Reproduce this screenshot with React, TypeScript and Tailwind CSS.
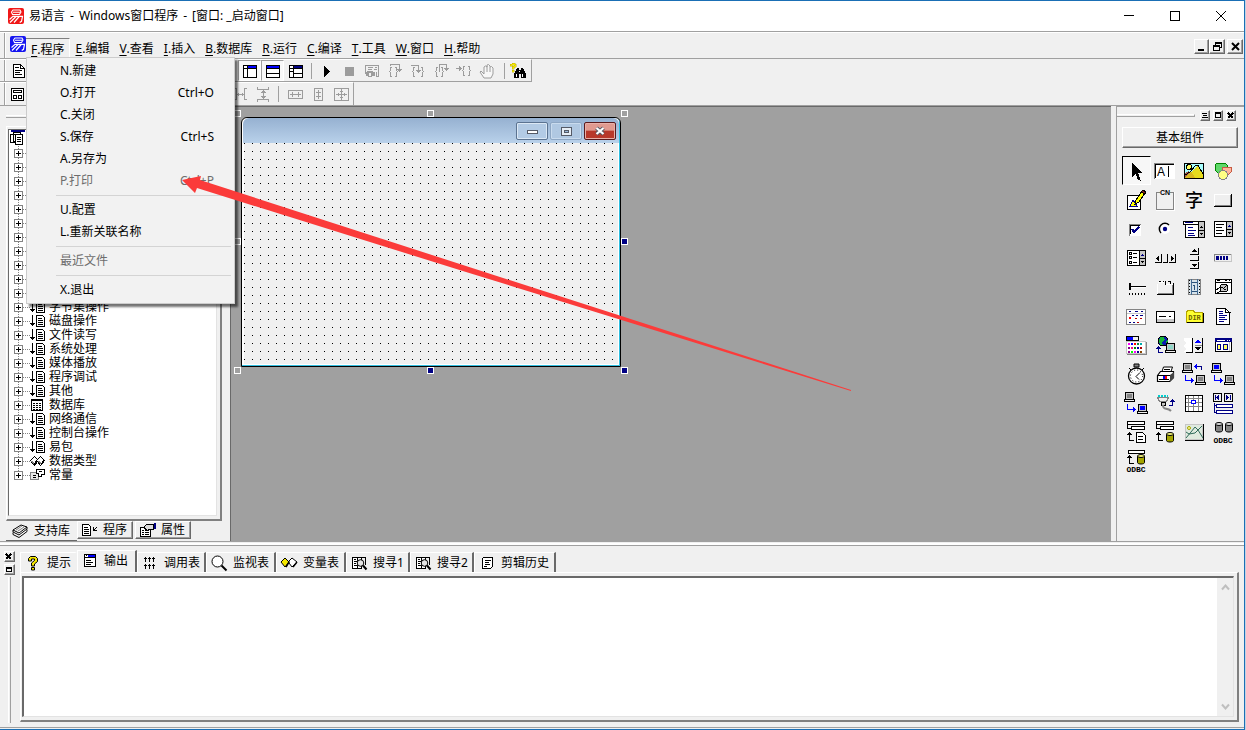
import type { ReactNode } from "react";

const K = "#000";
const NAVY = "#000084";
const BLUE = "#0000ff";
const GRAY = "#848484";
const SILVER = "#c6c6c6";

const raised =
  "border border-t-white border-l-white border-r-[#696969] border-b-[#696969] shadow-[inset_-1px_-1px_0_#a0a0a0]";

type ArtProps = { size?: number; w?: number; h?: number; children: ReactNode; smooth?: boolean };

function Art({ size = 26, w, h, children, smooth }: ArtProps) {
  const width = w ?? size;
  const height = h ?? size;
  return (
    <svg
      width={width}
      height={height}
      viewBox={`0 0 ${width} ${height}`}
      fill="none"
      stroke="none"
      shapeRendering={smooth ? "auto" : "crispEdges"}
      className="block shrink-0 overflow-visible"
      aria-hidden="true"
    >
      {children}
    </svg>
  );
}

type BoxProps = { x: number; y: number; w: number; h: number; f?: string; s?: string };

function Box({ x, y, w, h, f = "none", s }: BoxProps) {
  return s ? (
    <rect x={x + 0.5} y={y + 0.5} width={w - 1} height={h - 1} fill={f} stroke={s} />
  ) : (
    <rect x={x} y={y} width={w} height={h} fill={f} />
  );
}

function Line({ d, c = K, w = 1 }: { d: string; c?: string; w?: number }) {
  return <path d={d} stroke={c} strokeWidth={w} />;
}

/* ---------- small shared glyphs ---------- */

function Logo({ color }: { color: string }) {
  return (
    <Art size={16} smooth>
      <rect x="0" y="0" width="16" height="16" rx="2" fill={color} />
      <path d="M4.500 6.500L3.500 4l1.500-2h7l1 2-1.500 2.500zM5 4.300h7" stroke="#fff" strokeWidth="1.100" />
      <path d="M1.500 11.500L5 8.300h9.500l-1 5-1.800 1.200M8 8.500L2 14.500M11.200 8.500L6 14.500" stroke="#fff" strokeWidth="1.200" />
    </Art>
  );
}

function Monitor({ x, y, screen }: { x: number; y: number; screen: string }) {
  return (
    <g transform={`translate(${x} ${y})`}>
      <Box x={1} y={0} w={9} h={8} f={SILVER} s={K} />
      <Box x={3} y={2} w={5} h={4} f={screen} />
      <Box x={0} y={7} w={11} h={3} f="#efefef" s={K} />
    </g>
  );
}

function Disk({ x, y, f }: { x: number; y: number; f: string }) {
  return (
    <g transform={`translate(${x} ${y})`} shapeRendering="auto">
      <path d="M.5 2v6.500c0 2 7 2 7 0V2" fill={f} stroke={K} />
      <ellipse cx="4" cy="2" rx="3.500" ry="1.500" fill={f === GRAY ? "#dedede" : "#f4f47a"} stroke={K} />
    </g>
  );
}

function Rows({ y, w = 18 }: { y: number; w?: number }) {
  return (
    <g>
      <Box x={4} y={y} w={w} h={4} f="#fff" s={K} />
      <Box x={8} y={y + 5} w={w - 4} h={4} f="#fff" s={K} />
      <Line d={`M4.500 ${y + 2}v5.500h4`} />
    </g>
  );
}

const UpTurn = ({ x, y }: { x: number; y: number }) => (
  <g transform={`translate(${x} ${y})`}>
    <Line d="M2.500 1v7.500h4" />
    <path d="M0 3L2.500 0 5 3z" fill={K} />
  </g>
);

const Odbc = () => (
  <text x="13" y="24" fontSize="8" fontWeight="bold" textAnchor="middle" fill={K} className="font-['Liberation_Mono',monospace]">
    ODBC
  </text>
);

/* ---------- component palette ---------- */

const palette: { name: string; art: ReactNode }[] = [
  { name: "pointer", art: <path d="M9 4v15l3.500-3.500L15 22l3 1-1-3-2-5h4.500z" fill={K} /> },
  {
    name: "edit",
    art: (
      <>
        <Box x={2} y={5} w={21} h={16} f="#fff" />
        <Line d="M2.500 21V5.500H22" c={GRAY} />
        <Line d="M3.500 20V6.500H22" />
        <text x="5" y="18" fontSize="12" fill={K} className="font-['Liberation_Sans',sans-serif]">A</text>
        <Line d="M16.500 8v11" />
      </>
    ),
  },
  {
    name: "picture",
    art: (
      <>
        <Box x={3} y={5} w={20} h={16} f="#a8ffff" s={K} />
        <path d="M7 20l4-6 5-6 3 2 3 7v3z" fill="#e6dc1e" />
        <path d="M4 20v-5l4-2 4 7z" fill="#a05a4a" />
        <path d="M4 20l6-7 4 7z" fill="#d8b820" />
        <circle cx="8" cy="9" r="2.500" fill="#ffff63" stroke={K} />
        <path d="M4 17l5-3 6-7h2l5 9" stroke={K} />
      </>
    ),
  },
  {
    name: "shape",
    art: (
      <>
        <path d="M5 7l2-2h8l2 2v5l-2 3H8l-3-3z" fill="#5fd86a" stroke="#008400" />
        <path d="M13 9h8v5l-3 3h-4l-2-3z" fill="#ffb59c" stroke="#c65a42" />
        <circle cx="13" cy="17" r="4.500" fill="#ffff84" stroke={GRAY} />
      </>
    ),
  },
  {
    name: "canvas",
    art: (
      <>
        <path d="M4.500 8.500h10l3 3v11h-13z" fill="#fff" stroke={K} />
        <path d="M7 19l3-6 4 6z" fill="#ffff00" stroke={NAVY} />
        <path d="M12 17l1-4 6-9 3 2-6 9z" fill="#ffff00" stroke={K} />
        <path d="M18 5l2-2 3 2-1 2z" fill="#842020" stroke={K} />
      </>
    ),
  },
  {
    name: "group",
    art: (
      <>
        <path d="M8 5.500H4.500v17h17v-17H18" stroke={GRAY} />
        <path d="M22.500 5v18.500H4" stroke="#fff" />
        <text x="13" y="8" fontSize="7" fontWeight="bold" textAnchor="middle" fill={K} className="font-['Liberation_Sans',sans-serif]">CN</text>
      </>
    ),
  },
  {
    name: "label",
    art: (
      <text x="13" y="20" fontSize="18" fontWeight="500" textAnchor="middle" fill={K} className="font-['Noto_Sans_CJK_SC',sans-serif]">字</text>
    ),
  },
  {
    name: "button",
    art: (
      <>
        <Box x={4} y={7} w={18} h={13} f="#efefef" />
        <Line d="M4.500 19V7.500H21" c="#fff" />
        <Line d="M5 18.500h15.500V8" c={GRAY} />
        <Line d="M4 19.500h17.500V7" />
      </>
    ),
  },
  {
    name: "check",
    art: (
      <>
        <Box x={6} y={8} w={12} h={12} f="#fff" />
        <Line d="M6.500 20V8.500H18" c={GRAY} />
        <Line d="M7.500 18V9.500H17" />
        <Line d="M9 13l2 3 5-5" c={NAVY} w={2} />
      </>
    ),
  },
  {
    name: "radio",
    art: (
      <g shapeRendering="auto">
        <circle cx="13" cy="13" r="5" fill="#fff" />
        <path d="M9 17a5.500 5.500 0 0 1 8-8" stroke={K} strokeWidth="1.500" />
        <circle cx="13" cy="13" r="2.200" fill={NAVY} />
      </g>
    ),
  },
  {
    name: "combo",
    art: (
      <>
        <Box x={2} y={5} w={22} h={4} f="#fff" s={K} />
        <Box x={4} y={8} w={20} h={14} f="#fff" s={K} />
        <Line d="M4 6.500h8" c={NAVY} />
        <Line d="M7 11.500h5M7 14.500h8M7 17.500h6M7 19.500h7" c={NAVY} />
        <Box x={17} y={5} w={7} h={17} f={SILVER} s={K} />
        <path d="M19 11h3v1h-3zM20 10h1v1h-1zM19 17h3v1h-3zM20 18h1v1h-1z" fill={K} />
        <Line d="M17 14.500h7" />
      </>
    ),
  },
  {
    name: "list",
    art: (
      <>
        <Box x={4} y={5} w={19} h={16} f="#fff" s={K} />
        <Line d="M6 8.500h8M6 11.500h6M6 14.500h8M6 17.500h6" />
        <Box x={16} y={5} w={7} h={16} f={SILVER} s={K} />
        <path d="M18 10h3v1h-3zM19 9h1v1h-1z" fill={NAVY} />
        <path d="M18 16h3v1h-3zM19 17h1v1h-1z" fill={K} />
        <Line d="M16 13.500h7" />
      </>
    ),
  },
  {
    name: "checklist",
    art: (
      <>
        <Box x={4} y={5} w={19} h={16} f="#fff" s={K} />
        <Box x={6} y={7} w={3} h={3} s={K} />
        <Box x={6} y={11} w={3} h={3} s={K} />
        <Box x={6} y={16} w={3} h={3} s={K} />
        <Line d="M10 8.500h4M10 12.500h4M10 17.500h4" />
        <Box x={16} y={5} w={7} h={16} f={SILVER} s={K} />
        <path d="M18 10h3v1h-3zM19 9h1v1h-1z" fill={NAVY} />
        <path d="M18 16h3v1h-3zM19 17h1v1h-1z" fill={K} />
        <Line d="M16 13.500h7" />
      </>
    ),
  },
  {
    name: "hscroll",
    art: (
      <>
        <Box x={3} y={9} w={21} h={9} f="#efefef" />
        <path d="M4 13.500l3-3v6zM22 13.500l-3-3v6z" fill={K} />
        <Line d="M3 17.500h6.500V9M11 17.500h4.500V9M17 17.500h6.500V9" />
      </>
    ),
  },
  {
    name: "vscroll",
    art: (
      <>
        <Box x={9} y={3} w={9} h={21} f="#efefef" />
        <path d="M13.500 4l3 3h-6zM13.500 22l3-3h-6z" fill={K} />
        <Line d="M9 9.500h8.500V3M9 15.500h8.500V11M9 23.500h8.500V17" />
      </>
    ),
  },
  {
    name: "progress",
    art: (
      <>
        <Box x={4} y={9} w={18} h={8} f="#efefef" s={SILVER} />
        <Line d="M4 9.500h17M4.500 9v7" c={GRAY} />
        <path d="M6 11h3v4H6zM10 11h2v4h-2zM13 11h2v4h-2zM16 11h2v4h-2z" fill={NAVY} />
      </>
    ),
  },
  {
    name: "slider",
    art: (
      <>
        <Line d="M6 12.500h17" />
        <Line d="M6 13.500h17" c="#fff" />
        <path d="M6 9h2v6l-1 2-1-2z" fill={K} />
        <Line d="M6.500 19v2M9.500 19v2M12.500 19v2M15.500 19v2M18.500 19v2M21.500 19v2" />
      </>
    ),
  },
  {
    name: "tabs",
    art: (
      <>
        <Line d="M5.500 20V10M6 8.500h6M13 10.500h8" c="#fff" />
        <Line d="M7 7.500h2M11 7.500h1M16 7.500h2" />
        <Line d="M13.500 7v4M5 20.500h16.500V9M18.500 7v3" />
        <Line d="M6 19.500h14.500V11" c={GRAY} />
      </>
    ),
  },
  {
    name: "movie",
    art: (
      <>
        <Box x={7} y={5} w={13} h={16} f="#d6e3ec" s={GRAY} />
        <path d="M8.500 6v14M18.500 6v14" stroke={K} strokeDasharray="1 2" />
        <Line d="M10.500 5v16M16.500 5v16" c="#426b94" />
        <Line d="M11 8.500h5M13.500 11v5M12 11.500h2M11 17.500h5" c="#29527b" />
      </>
    ),
  },
  {
    name: "video",
    art: (
      <>
        <Box x={5} y={5} w={17} h={15} f="#fff" s={K} />
        <Line d="M5 8.500h17M7 6.500h3M15 6.500h2M19 6.500h1" />
        <circle cx="14" cy="14" r="4" fill={SILVER} stroke={K} />
        <Line d="M6 16l5-3 5 3M7 19l4-2M14 14l3-3" />
      </>
    ),
  },
  {
    name: "date",
    art: (
      <>
        <Box x={3} y={6} w={20} h={16} f="#fff" s={GRAY} />
        <Line d="M4 10.500h18" c={SILVER} />
        <Line d="M6 8.500h2M12 8.500h3M18 8.500h2" c={NAVY} />
        <Line d="M9 12.500h2M13 12.500h2M17 12.500h3M6 19.500h2M10 19.500h2" c={NAVY} />
        <path d="M6 14h2v2H6z" fill="#ff0000" />
        <Line d="M12 15.500h2M17 15.500h2M14 19.500h2" c="#b50000" />
      </>
    ),
  },
  {
    name: "combo-edit",
    art: (
      <>
        <rect x="4.500" y="8.500" width="18" height="11" rx="1" fill="#fff" stroke={K} />
        <Box x={5} y={16} w={17} h={3} f={SILVER} />
        <Line d="M7 13.500h7M17 13.500h2" />
      </>
    ),
  },
  {
    name: "directory",
    art: (
      <>
        <path d="M5.500 19V9l2-2h4l2 2h8v10z" fill="#ffff31" stroke="#b5a500" />
        <Line d="M6 19.500h16.500V10" />
        <text x="13.500" y="17" fontSize="7" fontWeight="bold" textAnchor="middle" fill="#6b6300" className="font-['Liberation_Mono',monospace]">DIR</text>
      </>
    ),
  },
  {
    name: "document",
    art: (
      <>
        <path d="M6.500 5.500h9l4 4v12h-13z" fill="#fff" stroke={K} />
        <Line d="M15.500 5v4.500h5" />
        <Line d="M9 8.500h4M9 10.500h4M9 12.500h8M9 14.500h6M9 16.500h8M9 18.500h5" c={NAVY} />
      </>
    ),
  },
  {
    name: "colors",
    art: (
      <>
        <Box x={3} y={4} w={13} h={5} f={BLUE} s={K} />
        <Box x={10} y={5} w={5} h={3} f="#efefef" />
        <Box x={3} y={9} w={20} h={13} f="#fff" s={SILVER} />
        {["#f0f", "#00f", "#f00", "#084", "#0aa", "#808", "#f08", "#080", "#00a", "#a00", "#808", "#0f0", "#f0f", "#008", "#840"].map((c, i) => (
          <Box key={i} x={5 + (i % 5) * 3} y={11 + Math.floor(i / 5) * 4} w={2} h={2} f={c} />
        ))}
        <Line d="M4 22.500h19.500V10" c={GRAY} />
      </>
    ),
  },
  {
    name: "internet",
    art: (
      <>
        <circle cx="11" cy="9" r="5" fill="#0a1fb0" stroke={K} />
        <path d="M8 5h4l1 3-3 2 1 3H8l-1-4zM14 9l2-1-1 4z" fill="#17b53a" />
        <Monitor x={13} y={11} screen="#8fd8c8" />
        <Line d="M6.500 15v5.500h4" c={NAVY} />
        <path d="M4 17l2.500-3L9 17z" fill={NAVY} />
      </>
    ),
  },
  {
    name: "spin",
    art: (
      <>
        <path d="M3 6h9v14H3l2-3-2-3 2-3-2-2z" fill="#fff" />
        <Line d="M5 20.500h6M14 20.500h8" />
        <Line d="M11.500 6v15M21.500 6v15" />
        <Line d="M14 13.500h7" c={GRAY} />
        <path d="M14 11h6l-3-4z" fill={BLUE} />
        <path d="M14 15h6l-3 4z" fill={K} />
      </>
    ),
  },
  {
    name: "dialog",
    art: (
      <>
        <Box x={5} y={6} w={17} h={14} f="#fff" s={K} />
        <Box x={5} y={6} w={17} h={4} f={NAVY} />
        <Line d="M7 8.500h8M17 8.500h1M19 8.500h1" c="#fff" />
        <Box x={7} y={12} w={4} h={6} f="#ffff63" s={NAVY} />
        <Box x={13} y={12} w={5} h={6} f="#ffff63" s={NAVY} />
        <Line d="M19.500 10v9" c={SILVER} />
      </>
    ),
  },
  {
    name: "clock",
    art: (
      <g shapeRendering="auto">
        <path d="M11 3h5v3h-5z" fill={GRAY} stroke={K} />
        <circle cx="13.500" cy="15" r="8" fill="#fff" stroke={K} strokeWidth="1.300" />
        <circle cx="13.500" cy="15" r="6" stroke={K} strokeDasharray="1 2.140" />
        <Line d="M13 15.500l4-4M13 15.500l3 3M6 7l2 2M21 7l-2 2" />
      </g>
    ),
  },
  {
    name: "printer",
    art: (
      <g shapeRendering="auto">
        <path d="M9.500 12l2-6h9l-2 6z" fill="#fff" stroke={K} />
        <path d="M5.500 14.500l3-4h13v6l-4 4h-12z" fill="#fff" stroke={K} strokeWidth="1.200" />
        <path d="M18 14l4-3v6l-4 4z" fill="#444" />
        <Line d="M12 8.500h6M11 10.500h6M6 14.500h12M7 18.500h10" />
        <path d="M11 15h2v3h-2z" fill={BLUE} />
        <path d="M13 15h2v3h-2z" fill="#f00" />
      </g>
    ),
  },
  {
    name: "datagram",
    art: (
      <>
        <Monitor x={1} y={2} screen={GRAY} />
        <Monitor x={14} y={14} screen={GRAY} />
        <Line d="M20.500 9V5.500H14" c={NAVY} />
        <path d="M13 5.500l3-3v6z" fill={BLUE} />
        <Line d="M4.500 14v5.500h6" c={BLUE} />
        <path d="M13 19.500l-3-3v6z" fill={BLUE} />
      </>
    ),
  },
  {
    name: "client",
    art: (
      <>
        <Monitor x={1} y={2} screen={BLUE} />
        <Monitor x={14} y={14} screen={GRAY} />
        <Line d="M4.500 14v5.500h6" c={BLUE} />
        <path d="M13 19.500l-3-3v6z" fill={BLUE} />
      </>
    ),
  },
  {
    name: "server",
    art: (
      <>
        <Monitor x={1} y={2} screen={GRAY} />
        <Monitor x={14} y={14} screen={BLUE} />
        <Line d="M4.500 14v5.500h6" c={BLUE} />
        <path d="M13 19.500l-3-3v6z" fill={BLUE} />
      </>
    ),
  },
  {
    name: "port",
    art: (
      <>
        <path d="M6 5.500h10" stroke="#00cfcf" strokeWidth="2" strokeDasharray="2 1" />
        <path d="M5.500 7.500h11l-2 4h-7z" fill="#efefef" stroke={GRAY} />
        <path d="M9 12h4v3H9z" fill={SILVER} stroke={K} />
        <g shapeRendering="auto">
          <path d="M11 15c0 6 4 2 8 6" stroke={GRAY} strokeWidth="2" />
        </g>
        <Line d="M17 15.500h3.500V11" c={NAVY} />
        <path d="M18 12l2.500-3 2.500 3z" fill={NAVY} />
      </>
    ),
  },
  {
    name: "table",
    art: (
      <>
        <Box x={4} y={5} w={18} h={17} f="#fff" s={K} />
        <Line d="M4 8.500h18M4 12.500h18M4 16.500h18M7.500 5v17M12.500 5v17M17.500 5v17" c={GRAY} />
        <Box x={10} y={10} w={5} h={4} f="#fff" s={BLUE} />
        <Box x={4} y={5} w={18} h={17} s={K} />
      </>
    ),
  },
  {
    name: "datasource",
    art: (
      <>
        <Box x={3} y={3} w={9} h={9} f="#efefef" s={K} />
        <Box x={14} y={3} w={9} h={9} f="#efefef" s={K} />
        <path d="M5 5h1v5H5zM9 5v5L6 7.500zM20 5h1v5h-1zM16 5v5l3-2.500z" fill={NAVY} />
        <Line d="M4.500 13v9.500h2M4 15.500h2" c={NAVY} />
        <Box x={6} y={14} w={17} h={4} f="#fff" s={NAVY} />
        <Box x={6} y={20} w={17} h={4} f="#fff" s={NAVY} />
      </>
    ),
  },
  {
    name: "provider",
    art: (
      <>
        <Rows y={2} />
        <UpTurn x={4} y={13} />
        <path d="M13.500 13.500h6l3 3v7h-9z" fill="#fff" stroke={K} />
        <Line d="M15 17.500h5M15 20.500h5" />
      </>
    ),
  },
  {
    name: "database",
    art: (
      <>
        <Rows y={2} />
        <UpTurn x={4} y={13} />
        <Disk x={14} y={13} f="#a5a500" />
      </>
    ),
  },
  {
    name: "graph",
    art: (
      <g shapeRendering="auto">
        <Box x={4} y={5} w={18} h={16} f="#dfeadf" s={SILVER} />
        <Line d="M5 19l5-6 4-5 3 3 5 8M5 13l3 2 6-1 7-7" c="#2f6b5a" />
        <circle cx="8" cy="9" r="1.500" stroke="#a5a500" fill="#ffffa0" />
        <Line d="M4 21.500h18.500V5" />
      </g>
    ),
  },
  {
    name: "odbc",
    art: (
      <>
        <Disk x={5} y={3} f={GRAY} />
        <Disk x={15} y={3} f={GRAY} />
        <Odbc />
      </>
    ),
  },
  {
    name: "odbc-provider",
    art: (
      <>
        <Box x={5} y={2} w={17} h={4} f="#fff" s={K} />
        <UpTurn x={4} y={7} />
        <Disk x={14} y={6} f="#a5a500" />
        <Odbc />
      </>
    ),
  },
];

/* ---------- toolbar ---------- */

const G = "#9c9c9c";

function WindowArt({ kind, active = true }: { kind: "left" | "bottom" | "both"; active?: boolean }) {
  return (
    <Art size={16}>
      <Box x={1} y={2} w={14} h={13} f="#fff" s={K} />
      <Line d="M1 5.500h14" />
      <Box x={kind === "bottom" ? 2 : 6} y={3} w={kind === "bottom" ? 12 : 8} h={2} f={active ? BLUE : NAVY} />
      {kind !== "bottom" && <Line d="M5.500 2v13" />}
      {kind === "bottom" && <Line d="M2 10.500h12" />}
      {kind === "both" && <Line d="M6 10.500h9M1 8.500h4" />}
    </Art>
  );
}

function Braces({ arc, head, wide }: { arc: string; head: string; wide?: boolean }) {
  return (
    <Art size={16}>
      <Line d="M5 4.500H3.500V8M2 8.500h1M3.500 9v4.500H5" c={G} />
      {wide ? (
        <Line d="M11 4.500h1.500V8M13 8.500h1M12.500 9v4.500H11" c={G} />
      ) : (
        <Line d="M8 4.500h1.500V8M10 8.500h1M9.500 9v4.500H8" c={G} />
      )}
      <Line d={arc} c={G} />
      <path d={head} fill={G} />
    </Art>
  );
}

const mainTools: { name: string; art: ReactNode; pressed?: boolean }[] = [
  { name: "work panel", art: <WindowArt kind="left" />, pressed: true },
  { name: "output panel", art: <WindowArt kind="bottom" />, pressed: true },
  { name: "palette", art: <WindowArt kind="both" active={false} /> },
];

const runTools: { name: string; art: ReactNode }[] = [
  { name: "run", art: <Art size={16}><path d="M6 3v11l6-5.500z" fill={K} /></Art> },
  { name: "stop", art: <Art size={16}><Box x={4} y={4} w={9} h={9} f={G} /></Art> },
  {
    name: "watch",
    art: (
      <Art size={16}>
        <path d="M1.500 9V2.500h13v11h-3" stroke={G} />
        <Line d="M4 4.500h5M11 4.500h2M4 6.500h4M10 6.500h3" c={G} />
        <path d="M1 9h4v4H2zM7 9h4v4H7z" fill={G} />
        <Line d="M5 9.500h2M3 8.500h6M4 13.500h4M12.500 9v4" c={G} />
      </Art>
    ),
  },
  { name: "step over", art: <Braces arc="M3.500 3V1.500h9V6" head="M10 6h5l-2.500 3z" /> },
  { name: "step into", art: <Braces wide arc="M1 2.500h7.500V7" head="M6 7h5l-2.500 3z" /> },
  { name: "step out", art: <Braces arc="M6.500 9V1.500h7V5" head="M11 5h5l-2.500 3z" /> },
  {
    name: "run to cursor",
    art: (
      <Art size={16}>
        <Line d="M9 3.500H7.500V7M6 7.500h1M7.500 8v4.500H9M12 3.500h1.500V7M14 7.500h1M13.500 8v4.500H12M0 5.500h3" c={G} />
        <path d="M3 3v5l3-2.500z" fill={G} />
      </Art>
    ),
  },
  {
    name: "breakpoint",
    art: (
      <Art size={16} smooth>
        <path d="M5 15l-4-6 1-1 3 3V4l1.500-1L8 4V2l1.500-.500L11 3v1l1.500-.500L14 5v6l-2 4z" stroke={G} fill="#f7f7f7" />
        <path d="M8 3v6M11 4v5" stroke={G} />
      </Art>
    ),
  },
];

const layoutTools: { name: string; art: ReactNode }[] = [
  {
    name: "same width",
    art: (
      <Art size={16}>
        <Box x={1} y={4} w={15} h={9} s={G} />
        <Line d="M3 8.500h11M5.500 6v5M11.500 6v5" c={G} />
      </Art>
    ),
  },
  {
    name: "same height",
    art: (
      <Art size={16}>
        <Box x={4} y={2} w={9} h={13} s={G} />
        <Line d="M8.500 4v9M6 6.500h5M6 10.500h5" c={G} />
      </Art>
    ),
  },
  {
    name: "same size",
    art: (
      <Art size={16}>
        <Box x={1} y={2} w={15} h={13} s={G} />
        <Line d="M8.500 3v11M3 8.500h11M7 5.500h3M7 11.500h3M5.500 7v3M11.500 7v3" c={G} />
      </Art>
    ),
  },
];

const Divider = () => <span className="block h-4 w-px bg-[#a0a0a0]" />;
const Grip = () => <span className="ml-1 w-0.5 self-stretch border-r border-l border-r-white border-l-[#a0a0a0]" />;

const DocArt = () => (
  <Art size={16}>
    <path d="M2.500 1.500h7l4 4v9h-11z" fill="#fff" stroke={K} />
    <Line d="M9.500 2v3.500h4M4 4.500h4M4 7.500h7M4 9.500h5M4 11.500h7" />
  </Art>
);

/* ---------- menu ---------- */

const menus = [
  ["F", "程序"], ["E", "编辑"], ["V", "查看"], ["I", "插入"], ["B", "数据库"],
  ["R", "运行"], ["C", "编译"], ["T", "工具"], ["W", "窗口"], ["H", "帮助"],
];

type Entry = { label: string; keys?: string; off?: boolean } | null;

const fileMenu: Entry[] = [
  { label: "N.新建" },
  { label: "O.打开", keys: "Ctrl+O" },
  { label: "C.关闭" },
  { label: "S.保存", keys: "Ctrl+S" },
  { label: "A.另存为" },
  { label: "P.打印", keys: "Ctrl+P", off: true },
  null,
  { label: "U.配置" },
  { label: "L.重新关联名称" },
  null,
  { label: "最近文件", off: true },
  null,
  { label: "X.退出" },
];

function FileMenu() {
  return (
    <div
      role="menu"
      className="absolute top-[19px] left-0 z-20 w-[209px] border border-[#ccc] bg-[#f2f2f2] py-0.5 shadow-[3px_3px_2px_rgba(0,0,0,0.55)]"
    >
      {fileMenu.map((entry, i) =>
        entry ? (
          <button
            key={i}
            role="menuitem"
            disabled={entry.off}
            className="flex h-[22px] w-full items-center justify-between pr-5 pl-[33px] text-black disabled:text-[#6d6d6d]"
          >
            <span>{entry.label}</span>
            <span>{entry.keys}</span>
          </button>
        ) : (
          <div key={i} role="separator" className="flex h-[7px] items-center pr-[3px] pl-[29px]">
            <span className="h-px flex-1 bg-[#d4d4d4]" />
          </div>
        ),
      )}
    </div>
  );
}

/* ---------- support library tree ---------- */

type NodeKind = "cmd" | "table" | "types" | "consts";

const nodes: { label: string; kind: NodeKind }[] = [
  ...Array.from({ length: 11 }, () => ({ label: "", kind: "cmd" as NodeKind })),
  { label: "字节集操作", kind: "cmd" },
  { label: "磁盘操作", kind: "cmd" },
  { label: "文件读写", kind: "cmd" },
  { label: "系统处理", kind: "cmd" },
  { label: "媒体播放", kind: "cmd" },
  { label: "程序调试", kind: "cmd" },
  { label: "其他", kind: "cmd" },
  { label: "数据库", kind: "table" },
  { label: "网络通信", kind: "cmd" },
  { label: "控制台操作", kind: "cmd" },
  { label: "易包", kind: "cmd" },
  { label: "数据类型", kind: "types" },
  { label: "常量", kind: "consts" },
];

function NodeArt({ kind }: { kind: NodeKind }) {
  return (
    <Art w={16} h={14}>
      {kind === "cmd" && (
        <>
          <Line d="M2.500 1v11M0 9.500h5M1 10.500h3" />
          <path d="M6.500 1.500h6l2 2v9h-8z" fill="#fff" stroke={K} />
          <Line d="M8 4.500h4M8 6.500h5M8 8.500h5M8 10.500h5" />
        </>
      )}
      {kind === "table" && (
        <>
          <Box x={1} y={1} w={12} h={12} f="#fff" s={K} />
          <Line d="M1 2.500h12" />
          <Line d="M3 5.500h2M6 5.500h2M9 5.500h2M3 7.500h2M6 7.500h2M9 7.500h2M3 9.500h2M6 9.500h2M9 9.500h2M3 11.500h2M6 11.500h2M9 11.500h2" />
        </>
      )}
      {kind === "types" && (
        <>
          <path d="M.5 6.500l4-4 3 3 3-3 4 4-4 5-3-4-3 4z" fill="#fff" stroke={K} />
          <path d="M1 7l3 1v3zM8 7l3 1v3z" fill={GRAY} />
          <Line d="M7 6l-3 5M14 6l-3 5" />
        </>
      )}
      {kind === "consts" && (
        <>
          <rect x=".5" y="4.500" width="8" height="7" rx="1" fill="#e8e8e8" stroke={GRAY} />
          <path d="M6.500 1.500h8v5h-3v2h-3v-3h-2z" fill="#fff" stroke={K} />
          <Line d="M3 7.500h3M3 9.500h3M9 3.500h3" />
        </>
      )}
    </Art>
  );
}

function Tree() {
  return (
    <ul role="tree" className="flex-1 overflow-hidden bg-white font-['Liberation_Sans','Noto_Sans_CJK_SC',sans-serif] text-xs">
      <li className="flex h-4">
        <Art w={18} h={17}>
          <Box x={2} y={0} w={14} h={2} f={NAVY} />
          <path d="M1.500 4.500h6v8h-6zM4.500 2.500h7v9h-7z" fill="#fff" stroke={K} />
          <path d="M6.500 4.500h7v10h-7z" fill="#fff" stroke={K} />
          <Line d="M8 7.500h4M8 9.500h4M8 11.500h4" />
        </Art>
      </li>
      {nodes.map((n, i) => (
        <li key={i} role="treeitem" className="flex h-[14px] items-center pl-[5px]">
          <Art w={16} h={14}>
            <path d={i === nodes.length - 1 ? "M4.500 0v4" : "M4.500 0v14"} stroke={GRAY} strokeDasharray="1 1" />
            <path d="M9 7.500h7" stroke={GRAY} strokeDasharray="1 1" />
            <Box x={0} y={3} w={9} h={9} f="#fff" s={GRAY} />
            <Line d="M2 7.500h5M4.500 5v5" />
          </Art>
          <NodeArt kind={n.kind} />
          <span className="pl-[3px] leading-[14px] whitespace-nowrap">{n.label}</span>
        </li>
      ))}
    </ul>
  );
}

const BooksArt = () => (
  <Art size={16} smooth>
    <path d="M1 7l8-5 6 2-8 6zM1 7v2l6 3 8-6V4M1 9.500v2l6 3 8-6v-2" fill="#fff" stroke={K} />
    <path d="M4 7l6-4M6 8l6-4" stroke={GRAY} />
  </Art>
);

const ProgArt = () => (
  <Art size={16}>
    <path d="M.5 2.500h6l2 2v9h-8z" fill="#fff" stroke={K} strokeWidth="1" />
    <Line d="M2 5.500h4M2 7.500h5M2 9.500h5M2 11.500h5M15 5l-3 3M11.500 5v3.500H15" />
  </Art>
);

const PropArt = () => (
  <Art size={16}>
    <path d="M.5 5.500h10v9H.500z" fill="#fff" stroke={K} />
    <Line d="M2 8.500h2M5 8.500h4M2 10.500h2M5 10.500h4M2 12.500h2M5 12.500h4" />
    <path d="M4 5l3-3h6v5h-3l-3 2z" fill="#ddd" stroke={K} />
    <Box x={14} y={1} w={2} h={6} f={NAVY} />
  </Art>
);

function LeftPanel() {
  return (
    <aside className="flex w-[230px] shrink-0 flex-col pr-2 pl-1.5">
      <div className="flex h-5 shrink-0 items-center">
        <span className="h-[3px] flex-1 border-t border-b border-t-white border-b-[#a0a0a0]" />
      </div>
      <div className="flex min-h-0 flex-1 flex-col border-t border-r-2 border-b-2 border-l border-t-white border-r-[#808080] border-b-[#808080] border-l-white pt-0.5 pr-[3px] pb-[3px] pl-px">
        <div className="flex min-h-0 flex-1 border border-t-[#696969] border-r-[#e3e3e3] border-b-[#e3e3e3] border-l-[#696969]">
          <Tree />
        </div>
      </div>
      <div role="tablist" className="flex h-5 shrink-0 items-start text-xs">
        <button role="tab" aria-selected="true" className="flex h-5 w-[71px] items-center gap-1.5 border-b border-[#696969] pl-1.5">
          <BooksArt />支持库
        </button>
        <button role="tab" aria-selected="false" className={`flex h-[18px] w-14 items-center gap-[5px] pl-1 ${raised}`}>
          <ProgArt />程序
        </button>
        <button role="tab" aria-selected="false" className={`ml-0.5 flex h-[18px] w-14 items-center gap-[5px] pl-1 ${raised}`}>
          <PropArt />属性
        </button>
      </div>
    </aside>
  );
}

/* ---------- form designer ---------- */

function Handle({ at, solid }: { at: string; solid?: boolean }) {
  return <span className={`absolute size-[7px] border border-white ${solid ? "bg-[#000084]" : "bg-[#a0a0a0]"} ${at}`} />;
}

function Designer() {
  return (
    <main className="min-w-0 flex-1 overflow-hidden border-t border-l border-[#696969] bg-[#a0a0a0] p-2.5">
      <div className="relative flex h-[250px] w-[380px] flex-col rounded-t-md border border-black bg-white shadow-[inset_-1px_-1px_0_#33bfe0]">
        <div className="mx-px flex h-[25px] items-start justify-end gap-0.5 rounded-t-md bg-linear-to-b from-[#96b1d1] to-[#b9d1ea] pt-1 pr-[3px]">
          <span className="grid h-[18px] w-8 place-items-center rounded-xs border border-[#5b7391] bg-[#b3cbe5] shadow-[inset_0_0_0_1px_#dbe8f5]">
            <Art w={11} h={6}><Box x={0} y={2} w={11} h={4} f="#fff" s="#555a66" /></Art>
          </span>
          <span className="grid h-[18px] w-8 place-items-center rounded-xs border border-[#8ea7c4] bg-[#b0c8e2] shadow-[inset_0_0_0_1px_#c9dbee]">
            <Art w={11} h={9}>
              <Box x={0} y={0} w={11} h={9} f="#e6edf5" s="#555a66" />
              <Box x={3} y={3} w={5} h={3} f="#9ab8d8" s="#555a66" />
            </Art>
          </span>
          <span className="grid h-[18px] w-8 place-items-center rounded-xs border border-[#5a1a1c] bg-linear-to-b from-[#e09a90] from-45% to-[#b8382a] to-50% shadow-[inset_0_0_0_1px_#e8b0a8]">
            <Art w={10} h={8} smooth>
              <path d="M1.500 1l7 6M8.500 1l-7 6" stroke="#555a66" strokeWidth="4" />
              <path d="M1.500 1l7 6M8.500 1l-7 6" stroke="#fff" strokeWidth="2.200" />
            </Art>
          </span>
        </div>
        <div className="mx-0.5 mb-0.5 flex-1 bg-[#f0f0f0]">
          <svg className="block size-full" shapeRendering="crispEdges" aria-hidden="true">
            <defs>
              <pattern id="dots" width="8" height="8" patternUnits="userSpaceOnUse">
                <rect width="1" height="1" fill="#000" />
              </pattern>
            </defs>
            <rect width="100%" height="100%" fill="url(#dots)" />
          </svg>
        </div>
        <Handle at="-top-2 -left-2" />
        <Handle at="-top-2 left-1/2 -ml-1" />
        <Handle at="-top-2 -right-2" />
        <Handle at="top-1/2 -mt-1 -left-2" />
        <Handle at="top-1/2 -mt-1 -right-2" solid />
        <Handle at="-bottom-2 -left-2" />
        <Handle at="-bottom-2 left-1/2 -ml-1" solid />
        <Handle at="-bottom-2 -right-2" solid />
      </div>
    </main>
  );
}

/* ---------- right palette ---------- */

function PaletteBar() {
  return (
    <aside className="ml-[5px] flex w-[128px] shrink-0 flex-col border-t border-l border-[#a0a0a0] pr-1.5">
      <div className="flex h-4 items-center gap-[3px] pr-0.5">
        <span className="mr-0.5 h-[3px] flex-1 border-t border-r border-b border-t-white border-r-[#a0a0a0] border-b-[#a0a0a0]" />
        <button aria-label="dock" className={`grid h-[11px] w-[10px] place-items-center ${raised}`}>
          <Art w={6} h={5}><Line d="M0 .5h5M1 2.500h4M0 4.500h6" /></Art>
        </button>
        <button aria-label="float" className={`grid h-[11px] w-[10px] place-items-center ${raised}`}>
          <Art w={6} h={6}><Box x={0} y={0} w={6} h={6} s={K} /><Box x={0} y={0} w={6} h={2} f={K} /></Art>
        </button>
        <button aria-label="close" className={`grid h-[11px] w-[10px] place-items-center ${raised}`}>
          <Art w={6} h={5}><path d="M0 0l5 5M5 0L0 5" stroke={K} strokeWidth="1.500" /></Art>
        </button>
      </div>
      <button className={`mt-1 ml-[5px] h-[21px] text-xs leading-none ${raised}`}>基本组件</button>
      <div className="mt-2 ml-[5px] grid grid-cols-4">
        {palette.map((p, i) => (
          <button
            key={p.name}
            aria-label={p.name}
            className={`size-[29px] border p-0 ${i === 0 ? "border-t-black border-r-white border-b-white border-l-black bg-[#f7f7f7]" : "border-transparent"}`}
          >
            <Art size={26}>{p.art}</Art>
          </button>
        ))}
      </div>
    </aside>
  );
}

/* ---------- output panel ---------- */

const ListArt = () => (
  <Art size={16}>
    <Box x={1} y={2} w={10} h={12} f="#fff" s={K} />
    <Line d="M3 4.500h2M3 6.500h3M3 8.500h2M3 10.500h3M6.500 3v10" />
    <Line d="M1 2.500h13.500V10M1 13.500h9" />
    <g shapeRendering="auto">
      <circle cx="9.500" cy="8" r="3.300" fill="#e4e4e4" stroke={K} />
      <path d="M12 10.500l3.500 4" stroke={K} strokeWidth="2" />
    </g>
  </Art>
);

const outputTabs: { label: string; width: string; art: ReactNode }[] = [
  {
    label: "提示",
    width: "w-[57px]",
    art: (
      <Art size={16} smooth>
        <path d="M3.500 6V3.500l2-2h5l2 2v3l-3 2.500v2h-3V8l3-2.500V4h-3v2z" fill="#f5e800" stroke={K} />
        <path d="M6.500 12.500h3v2.500h-3z" fill="#f5e800" stroke={K} />
      </Art>
    ),
  },
  {
    label: "输出",
    width: "w-[60px]",
    art: (
      <Art size={16}>
        <Box x={2} y={1} w={12} h={13} f="#fff" s={K} />
        <Box x={6} y={2} w={7} h={2} f={BLUE} />
        <Line d="M2 4.500h12M4 7.500h5M4 9.500h7M4 11.500h5M4 2.500h1" />
      </Art>
    ),
  },
  {
    label: "调用表",
    width: "w-[69px]",
    art: (
      <Art size={16}>
        <Line d="M3.500 2v5M7.500 2v5M11.500 2v5M3.500 9v5M7.500 9v5M11.500 9v5" />
        <Line d="M2 3.500h3M6 3.500h3M10 3.500h3M2 10.500h3M6 10.500h3M10 10.500h3" />
      </Art>
    ),
  },
  {
    label: "监视表",
    width: "w-[70px]",
    art: (
      <Art size={16} smooth>
        <circle cx="6.500" cy="6.500" r="5.500" fill="#fff" stroke={K} />
        <path d="M10.500 10.500l5 5" stroke={K} strokeWidth="2" />
      </Art>
    ),
  },
  {
    label: "变量表",
    width: "w-[70px]",
    art: (
      <Art size={16} smooth>
        <path d="M0 7l4-4 4 4-4 5z" fill="#f5e800" stroke={K} />
        <path d="M8 6l3-3 5 4-5 5-3-4z" fill="#fff" stroke={K} />
        <path d="M5 12l3-5M12 12l4-5" stroke={K} strokeWidth="1.500" />
      </Art>
    ),
  },
  { label: "搜寻1", width: "w-[64px]", art: <ListArt /> },
  { label: "搜寻2", width: "w-[64px]", art: <ListArt /> },
  {
    label: "剪辑历史",
    width: "w-[82px]",
    art: (
      <Art size={16}>
        <path d="M4.500 2.500h9v9l-2 2h-8v-10z" fill="#fff" stroke={K} />
        <Line d="M6 5.500h6M6 7.500h4M6 9.500h5M5 11.500h3" />
      </Art>
    ),
  },
];

function OutputPanel() {
  return (
    <section className="flex h-[188px] shrink-0 flex-col border-t border-[#a0a0a0]">
      <div className="mt-px h-[3px] border-t-2 border-b border-t-white border-b-[#a0a0a0]" />
      <div className="flex min-h-0 flex-1 border-b border-[#a0a0a0]">
        <div className="flex w-5 flex-col items-center gap-0.5 pt-[5px] pr-0.5 pb-1">
          <button aria-label="close" className={`grid size-[11px] place-items-center ${raised}`}>
            <Art w={6} h={5}><path d="M0 0l5 5M5 0L0 5" stroke={K} strokeWidth="1.500" /></Art>
          </button>
          <button aria-label="float" className={`grid size-[11px] place-items-center ${raised}`}>
            <Art w={6} h={5}><Box x={0} y={0} w={6} h={5} s={K} /><Box x={0} y={0} w={6} h={2} f={K} /></Art>
          </button>
          <span className="w-[3px] flex-1 border-r border-l border-r-[#a0a0a0] border-l-white" />
        </div>
        <div className="flex min-w-0 flex-1 flex-col pt-1 pr-[5px] pb-[5px]">
          <div role="tablist" className="flex items-end text-xs">
            {outputTabs.map((t, i) => {
              const on = i === 1;
              return (
                <button
                  key={t.label}
                  role="tab"
                  aria-selected={on}
                  className={`flex shrink-0 items-center gap-1.5 border-t border-r-2 border-l border-t-white border-l-white pl-1 whitespace-nowrap ${on ? "h-[22px] pb-0.5" : "h-5"} ${i === 0 ? "border-r-transparent" : "border-r-[#696969]"} ${t.width}`}
                >
                  {t.art}
                  {t.label}
                </button>
              );
            })}
          </div>
          <div className="flex min-h-0 flex-1 border-t border-r-2 border-b-2 border-l border-t-white border-r-[#808080] border-b-[#808080] border-l-white pt-[3px] pr-[3px] pb-[3px] pl-px">
            <div className="flex min-w-0 flex-1 border-t-2 border-r border-b border-l-2 border-t-[#696969] border-r-[#e3e3e3] border-b-[#e3e3e3] border-l-[#696969] bg-white">
              <textarea aria-label="输出" readOnly className="min-w-0 flex-1 resize-none bg-white outline-none" />
              <div className="flex w-4 flex-col items-center justify-between bg-[#f0f0f0] py-1.5">
                <Art w={9} h={6} smooth><path d="M1 5.500l3.500-4L8 5.500" stroke="#bfbfbf" strokeWidth="2" /></Art>
                <Art w={9} h={6} smooth><path d="M1 .5l3.500 4L8 .5" stroke="#bfbfbf" strokeWidth="2" /></Art>
              </div>
            </div>
          </div>
        </div>
      </div>
      <div className="h-px" />
    </section>
  );
}

/* ---------- window ---------- */

export default function App() {
  return (
    <div className="relative h-screen min-h-[600px] overflow-hidden bg-[#c3d3e3] pr-px font-['Noto_Sans','Noto_Sans_CJK_SC',sans-serif] text-xs text-black select-none">
      <div className="flex h-full flex-col border-t border-r border-b border-[#1a6fb5] bg-[#f0f0f0]">
        <header className="flex h-[31px] shrink-0 items-center border-b border-[#a0a0a0] bg-white pl-2">
          <Logo color="#f01818" />
          <h1 className="flex flex-1 gap-[5px] pl-[5px] text-xs font-normal">
            <span>易语言</span>
            <span>-</span>
            <span>Windows窗口程序</span>
            <span>-</span>
            <span>[窗口: _启动窗口]</span>
          </h1>
          <button aria-label="minimize" className="grid h-full w-[46px] place-items-center">
            <Art w={10} h={10}><Line d="M0 4.500h10" /></Art>
          </button>
          <button aria-label="maximize" className="grid h-full w-[46px] place-items-center">
            <Art w={10} h={10}><Box x={0} y={0} w={10} h={10} s={K} /></Art>
          </button>
          <button aria-label="close" className="grid h-full w-[46px] place-items-center">
            <Art w={10} h={10} smooth><Line d="M0 0l10 10M10 0L0 10" /></Art>
          </button>
        </header>

        <nav className="flex h-[27px] shrink-0 items-center border-t border-b border-t-white border-b-[#a0a0a0]">
          <Grip />
          <span className="mb-1 ml-1"><Logo color="#1414f0" /></span>
          <ul className="flex pt-[5px]">
            {menus.map(([key, label], i) => (
              <li key={key} className="relative">
                <button
                  className={`flex h-5 items-center px-[5px] pt-0.5 whitespace-nowrap ${i === 0 ? "border-t border-r border-t-[#808080] border-r-white" : ""}`}
                >
                  <span className="underline underline-offset-2">{key}</span>.{label}
                </button>
                {i === 0 && <FileMenu />}
              </li>
            ))}
          </ul>
          <div className="ml-auto flex pt-0.5 pr-px">
            <button aria-label="minimize child" className={`grid h-[15px] w-[15px] place-items-center ${raised}`}>
              <Art w={9} h={8}><Box x={1} y={6} w={6} h={2} f={K} /></Art>
            </button>
            <button aria-label="restore child" className={`grid h-[15px] w-4 place-items-center ${raised}`}>
              <Art w={9} h={9}>
                <Box x={2} y={0} w={7} h={6} s={K} /><Box x={2} y={0} w={7} h={2} f={K} />
                <Box x={0} y={3} w={7} h={6} f="#f0f0f0" s={K} /><Box x={0} y={3} w={7} h={2} f={K} />
              </Art>
            </button>
            <button aria-label="close child" className={`ml-0.5 grid h-[15px] w-4 place-items-center ${raised}`}>
              <Art w={9} h={8} smooth><path d="M1 0l7 7M8 0L1 7" stroke={K} strokeWidth="2" /></Art>
            </button>
          </div>
        </nav>

        <div className="flex h-[23px] w-[532px] shrink-0 items-center border-t border-r border-b border-t-white border-r-[#a0a0a0] border-b-[#a0a0a0]">
          <Grip />
          <button aria-label="new" className="ml-[5px]"><DocArt /></button>
          <div className="ml-auto flex items-center">
            {mainTools.map((t) => (
              <button
                key={t.name}
                aria-label={t.name}
                className={`grid h-[21px] w-[23px] place-items-center border ${t.pressed ? "border-t-[#a0a0a0] border-r-white border-b-white border-l-[#a0a0a0] bg-[#f8f8f8]" : "border-transparent"}`}
              >
                {t.art}
              </button>
            ))}
            <span className="pr-0.5 pl-1"><Divider /></span>
            {runTools.map((t) => (
              <button key={t.name} aria-label={t.name} className="grid h-[21px] w-[23px] place-items-center">
                {t.art}
              </button>
            ))}
            <span className="pl-1.5"><Divider /></span>
            <button aria-label="find" className="grid h-[21px] w-[26px] place-items-center">
              <Art size={16}>
                <path d="M0 3V1h2V0h3v1h1v3H4v2H2V3h2V2H2v1zM2 7h2v2H2z" fill="#f5e800" stroke="#b5a500" strokeWidth=".4" />
                <path d="M6 7l1-2h2v2h2V5h2l1 2 2 4v4h-5v-4H9v4H4v-4z" fill={K} />
                <path d="M6 11h1v3H6zM12 11h1v3h-1zM9 8h1v1H9z" fill="#fff" />
              </Art>
            </button>
          </div>
        </div>

        <div className="flex h-[23px] w-[354px] shrink-0 items-center border-t border-r border-t-white border-r-[#a0a0a0]">
          <Grip />
          <button aria-label="align" className="ml-[5px]">
            <Art size={16}>
              <Box x={0} y={2} w={13} h={13} f="#fff" s={K} />
              <Box x={2} y={4} w={9} h={3} s={K} />
              <Box x={2} y={9} w={4} h={4} s={K} />
              <Box x={7} y={9} w={4} h={4} s={K} />
            </Art>
          </button>
          <div className="ml-auto flex items-center pr-px">
            <button aria-label="space across" className="grid h-[21px] w-[23px] place-items-center">
              <Art size={16}><Line d="M2 2.500h2.500v11H2M15 2.500h-2.500v11H15M5 8.500h7M6.500 7v3M10.500 7v3" c={G} /></Art>
            </button>
            <button aria-label="space down" className="grid h-[21px] w-[23px] place-items-center">
              <Art size={16}><Line d="M2.500 1v2.500h11V1M2.500 16v-2.500h11V16M8.500 4v9M6 6.500h5M7 5.500h3M6 10.500h5M7 11.500h3" c={G} /></Art>
            </button>
            <span className="px-1"><Divider /></span>
            {layoutTools.map((t) => (
              <button key={t.name} aria-label={t.name} className="grid h-[21px] w-[23px] place-items-center">
                {t.art}
              </button>
            ))}
          </div>
        </div>

        <div className="flex min-h-0 flex-1 border-t border-[#a0a0a0]">
          <LeftPanel />
          <Designer />
          <PaletteBar />
        </div>

        <OutputPanel />
      </div>

      <svg className="pointer-events-none absolute top-0 left-0 z-30" width="860" height="400" viewBox="0 0 860 400" aria-hidden="true">
        <path d="M182 180l19-4-1 4L466 266 851 390v1L466 272 197 188l-2 5z" fill="#fb3b3a" />
      </svg>
    </div>
  );
}
